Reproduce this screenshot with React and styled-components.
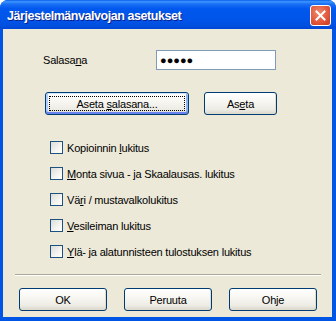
import React from "react";
import styled, { createGlobalStyle } from "styled-components";

const Global = createGlobalStyle`
  html, body { margin: 0; padding: 0; background: #ffffff; }
  body {
    font-family: "Liberation Sans", Arial, sans-serif;
    font-size: 11px;
    letter-spacing: -0.2px;
    color: #000;
  }
`;

const Window = styled.div`
  width: 336px;
  height: 321px;
  display: flex;
  flex-direction: column;
  background: #0055e5;
  border-radius: 8px 8px 0 0;
  overflow: hidden;
  box-sizing: border-box;
`;

const TitleBar = styled.div`
  height: 29px;
  flex: none;
  display: flex;
  align-items: center;
  justify-content: space-between;
  padding: 0 5px 0 7px;
  background: linear-gradient(
    180deg,
    #0a5fe8 0%,
    #3d95ff 6%,
    #1a6ff5 14%,
    #0058ee 30%,
    #0054e8 70%,
    #0050e0 88%,
    #0046d4 100%
  );
`;

const Title = styled.span`
  font-family: "Liberation Sans", Arial, sans-serif;
  font-weight: bold;
  font-size: 12.5px;
  letter-spacing: -0.45px;
  color: #ffffff;
  text-shadow: 1px 1px 0 #0a1e8a;
  padding-top: 2px;
`;

const CloseButton = styled.div`
  width: 21px;
  height: 21px;
  box-sizing: border-box;
  border: 1px solid #ffffff;
  border-radius: 3px;
  background: radial-gradient(circle at 40% 35%, #f08a6c 0%, #e2583e 55%, #c7391c 100%);
  display: flex;
  align-items: center;
  justify-content: center;
  margin-top: 1px;
`;

const Body = styled.div`
  flex: 1;
  margin: 0 4px 4px 3px;
  background: #ece9d8;
  display: flex;
  flex-direction: column;
`;

const PasswordRow = styled.div`
  display: flex;
  align-items: center;
  margin-top: 21px;
  padding-left: 40px;
  height: 20px;
`;

const FieldLabel = styled.span`
  width: 113px;
`;

const PasswordBox = styled.div`
  width: 120px;
  height: 20px;
  box-sizing: border-box;
  border: 1px solid #7f9db9;
  background: #ffffff;
  display: flex;
  align-items: center;
  padding-left: 3px;
  font-size: 11px;
  letter-spacing: 0;
`;

const ButtonRow = styled.div`
  display: flex;
  gap: ${(p) => p.gap}px;
  margin-top: ${(p) => p.top}px;
  padding-left: ${(p) => p.left}px;
`;

const Button = styled.div`
  position: relative;
  width: ${(p) => p.width}px;
  height: 23px;
  box-sizing: border-box;
  border: 1px solid #003c74;
  border-radius: 3px;
  background: linear-gradient(180deg, #ffffff 0%, #f6f5f0 45%, #ecebe4 80%, #d8d4c8 100%);
  box-shadow: ${(p) =>
    p.primary
      ? "inset 0 1px 0 #cee7ff, inset 0 -2px 0 #6982ee, inset 2px 0 0 #b2d0ff, inset -2px 0 0 #8cb4f2"
      : "inset -1px -1px 0 #e0dccf"};
  display: flex;
  align-items: center;
  justify-content: center;
  font-size: 11px;

  ${(p) =>
    p.primary &&
    `&::after {
      content: "";
      position: absolute;
      inset: 3px;
      border: 1px dotted #000;
    }`}
`;

const CheckList = styled.div`
  display: flex;
  flex-direction: column;
  gap: 13px;
  margin-top: 26px;
  padding-left: 47px;
`;

const CheckRow = styled.label`
  display: flex;
  align-items: center;
  gap: 4px;
  height: 13px;
`;

const Box = styled.span`
  width: 13px;
  height: 13px;
  box-sizing: border-box;
  border: 1px solid #1c5180;
  background: linear-gradient(135deg, #dcdcd7 0%, #f4f4f1 60%, #ffffff 100%);
  flex: none;
`;

const Separator = styled.div`
  margin: 16px 11px 0 12px;
  height: 1px;
  background: #aca899;
  border-bottom: 1px solid #ffffff;
`;

const Key = styled.u`
  text-decoration: underline;
`;

const options = [
  <>Kopioinnin <Key>l</Key>ukitus</>,
  <><Key>M</Key>onta sivua - ja Skaalausas. lukitus</>,
  <>Vä<Key>r</Key>i / mustavalkolukitus</>,
  <><Key>V</Key>esileiman lukitus</>,
  <><Key>Y</Key>lä- ja alatunnisteen tulostuksen lukitus</>,
];

export default function App() {
  return (
    <>
      <Global />
      <Window>
        <TitleBar>
          <Title>Järjestelmänvalvojan asetukset</Title>
          <CloseButton>
            <svg width="11" height="11" viewBox="0 0 11 11">
              <path d="M1.5 1.5 L9.5 9.5 M9.5 1.5 L1.5 9.5" stroke="#fff" strokeWidth="2" strokeLinecap="square" />
            </svg>
          </CloseButton>
        </TitleBar>
        <Body>
          <PasswordRow>
            <FieldLabel>
              Salasa<Key>n</Key>a
            </FieldLabel>
            <PasswordBox>●●●●●</PasswordBox>
          </PasswordRow>
          <ButtonRow top={22} left={42} gap={15}>
            <Button width={144} primary>
              <span>
                Aseta <Key>s</Key>alasana...
              </span>
            </Button>
            <Button width={73}>
              <span>
                As<Key>e</Key>ta
              </span>
            </Button>
          </ButtonRow>
          <CheckList>
            {options.map((o, i) => (
              <CheckRow key={i}>
                <Box />
                <span>{o}</span>
              </CheckRow>
            ))}
          </CheckList>
          <Separator />
          <ButtonRow top={12} left={16} gap={17}>
            <Button width={88}>OK</Button>
            <Button width={88}>Peruuta</Button>
            <Button width={88}>Ohje</Button>
          </ButtonRow>
        </Body>
      </Window>
    </>
  );
}
